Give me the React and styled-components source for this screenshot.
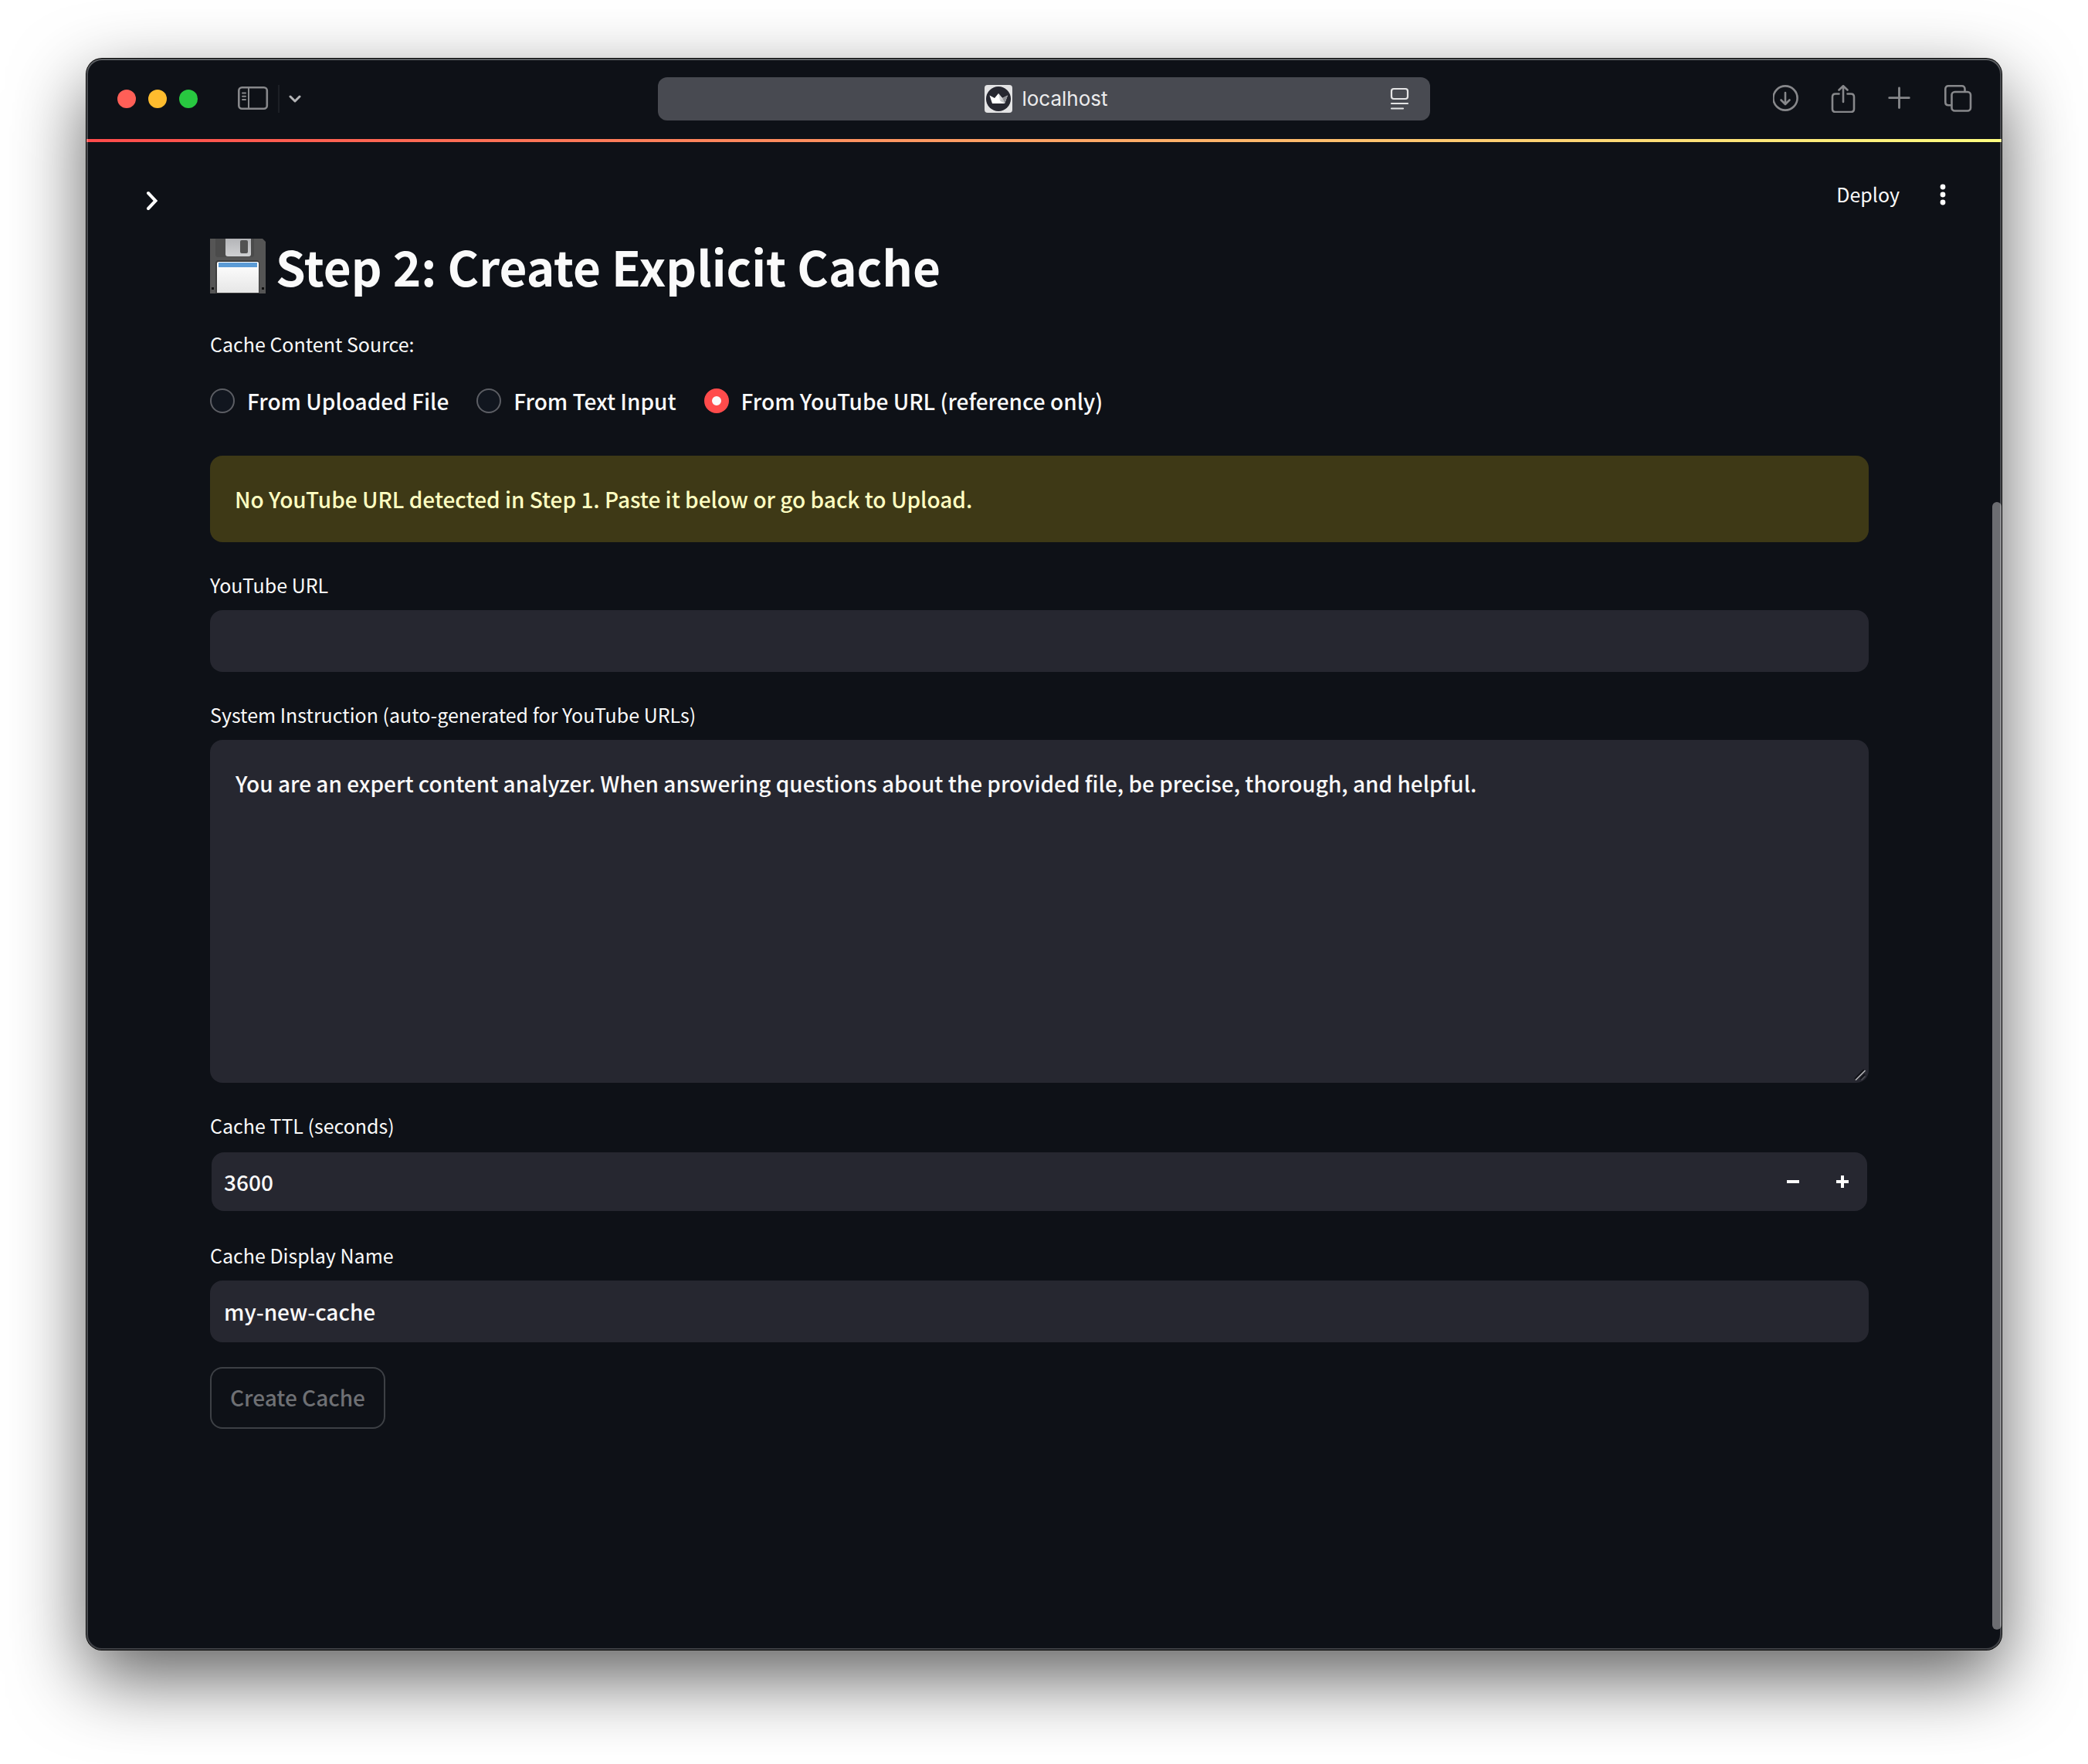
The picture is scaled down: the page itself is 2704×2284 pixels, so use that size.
import React, { useState } from "react";
import styled, { createGlobalStyle } from "styled-components";

const sans = `"Noto Sans CJK SC", "Noto Sans", sans-serif`;
const color = {
  bg: "#0e1117",
  field: "#262730",
  text: "#fafafa",
  accent: "#ff4b4b",
  chrome: "#87888b",
  address: "#484a51",
};

const GlobalStyle = createGlobalStyle`
  *, *::before, *::after { box-sizing: border-box; }
  body { margin: 0; background: #fff; }
  button, input, textarea { font: inherit; color: inherit; margin: 0; }
  button { background: none; border: 0; padding: 0; }
  svg { display: block; }
`;

const Desktop = styled.div`
  min-height: 100vh;
  padding: 76px 112px 148px;
  display: flex;
  overflow: hidden;
  font-family: ${sans};
  font-weight: 500;
  color: ${color.text};
`;

const BrowserWindow = styled.div`
  position: relative;
  flex: 1;
  min-width: 0;
  display: flex;
  flex-direction: column;
  background: ${color.bg};
  border-radius: 20px;
  box-shadow: 0 0 0 1px #000, 0 36px 96px rgba(0, 0, 0, 0.63);

  &::after {
    content: "";
    position: absolute;
    inset: 0;
    border-radius: inherit;
    pointer-events: none;
    box-shadow: inset 0 0 0 2px rgba(255, 255, 255, 0.2), inset 0 1px 0 1px rgba(255, 255, 255, 0.16);
  }
`;

const Toolbar = styled.header`
  height: 104px;
  display: grid;
  grid-template-columns: 37fr 50fr 37fr;
  align-items: center;
`;

const ToolbarStart = styled.div`
  display: flex;
  align-items: center;
  padding-left: 40px;
`;

const Lights = styled.div`
  display: flex;
  gap: 16px;
  margin-right: 52px;
`;

const Light = styled.button`
  width: 24px;
  height: 24px;
  border-radius: 50%;
  background: ${(p) => p.$fill};
`;

const Divider = styled.span`
  width: 2px;
  height: 36px;
  margin: 0 12px;
  background: #1d2026;
`;

const AddressBar = styled.div`
  height: 56px;
  display: grid;
  grid-template-columns: 1fr auto 1fr;
  align-items: center;
  padding: 0 24px;
  border-radius: 12px;
  background: ${color.address};
`;

const Address = styled.div`
  grid-column: 2;
  display: flex;
  align-items: center;
  gap: 12px;
  padding-left: 6px;
  font: 26px/32px Inter, "Liberation Sans", sans-serif;
  color: #ececed;
`;

const ReaderButton = styled.button`
  justify-self: end;
`;

const ToolbarEnd = styled.div`
  display: flex;
  justify-content: flex-end;
  gap: 38px;
  padding-right: 38px;
`;

const ProgressLine = styled.div`
  height: 4px;
  background: linear-gradient(90deg, ${color.accent}, #fffd80);
`;

const Viewport = styled.div`
  position: relative;
  flex: 1;
  padding-right: 12px;
`;

const ScrollTrack = styled.div`
  position: absolute;
  inset: 0 0 0 auto;
  width: 12px;
  display: flex;
  flex-direction: column;
  justify-content: flex-end;
  padding-bottom: 26px;
`;

const ScrollThumb = styled.div`
  height: 75.8%;
  border-radius: 6px;
  background: #6c6d71;
`;

const AppHeader = styled.div`
  height: 114px;
  display: flex;
  justify-content: space-between;
  align-items: flex-start;
  padding: 48px 48px 0 64px;
`;

const ExpandButton = styled.button`
  width: 40px;
  height: 56px;
  display: grid;
  place-items: center;
`;

const HeaderActions = styled.div`
  display: flex;
  align-items: flex-start;
  gap: 40px;
`;

const DeployButton = styled.button`
  font-size: 25px;
  font-weight: 400;
  line-height: 38px;
`;

const MenuButton = styled.button`
  width: 32px;
  height: 40px;
  display: grid;
  place-items: center;
`;

const Form = styled.form`
  display: flex;
  flex-direction: column;
  gap: 32px;
  padding: 0 160px 80px;
`;

const Title = styled.h1`
  margin: 0;
  display: flex;
  align-items: center;
  gap: 13px;
  font-size: 62px;
  line-height: 92px;
  font-weight: 700;
`;

const Field = styled.div`
  display: flex;
  flex-direction: column;
  gap: 10px;
`;

const FieldSet = styled.fieldset`
  margin: 0;
  padding: 0;
  border: 0;
  min-width: 0;
`;

const labelText = `
  padding: 0;
  font-size: 25px;
  font-weight: 400;
  line-height: 46px;
`;
const Label = styled.label`${labelText}`;
const Legend = styled.legend`${labelText}`;

const RadioRow = styled.div`
  display: flex;
  flex-wrap: wrap;
  gap: 36px;
  padding: 18px 0 16px;
  margin-top: 10px;
`;

const RadioLabel = styled.label`
  display: flex;
  align-items: center;
  gap: 16px;
  font-size: 28px;
  line-height: 46px;
`;

const Radio = styled.input`
  appearance: none;
  width: 32px;
  height: 32px;
  border: 2px solid #5c5e64;
  border-radius: 50%;
  background: #11161f;

  &:checked {
    border: 10px solid ${color.accent};
    background: #fafafa;
  }
`;

const Alert = styled.div`
  padding: 32px;
  border-radius: 16px;
  background: #3e3916;
  color: #ffffc2;
  font-size: 28px;
  line-height: 48px;
`;

const TextInput = styled.input`
  width: 100%;
  height: 80px;
  padding: 0 18px;
  border: 0;
  border-radius: 16px;
  outline: none;
  background: ${color.field};
  font-size: 28px;
`;

const AreaWrap = styled.div`
  position: relative;
  display: flex;
`;

const TextArea = styled.textarea`
  width: 100%;
  height: 444px;
  padding: 32px 33px;
  border: 0;
  border-radius: 16px;
  outline: none;
  resize: none;
  background: ${color.field};
  font-size: 28px;
  line-height: 48px;
`;

const ResizeGrip = styled.svg`
  position: absolute;
  right: 1px;
  bottom: 1px;
`;

const NumberBox = styled.div`
  height: 80px;
  display: flex;
  align-items: center;
  border: 2px solid transparent;
  border-radius: 18px;
  background: ${color.field};
  background-clip: padding-box;
`;

const NumberInput = styled.input`
  flex: 1;
  min-width: 0;
  height: 76px;
  padding: 0 16px;
  border: 0;
  outline: none;
  background: transparent;
  font-size: 28px;
`;

const StepButton = styled.button`
  width: 64px;
  height: 76px;
  display: grid;
  place-items: center;
`;

const SubmitButton = styled.button`
  align-self: flex-start;
  height: 80px;
  padding: 0 24px 2px;
  border: 2px solid #3d4045;
  border-radius: 16px;
  font-size: 28px;
  color: #6e7074;
`;

const ChromeIcon = ({ children, width = 36, height = 36, stroke = color.chrome }) => (
  <svg width={width} height={height} viewBox={`0 0 ${width} ${height}`} fill="none" stroke={stroke}
    strokeWidth="2.6" strokeLinecap="round" strokeLinejoin="round" aria-hidden="true">
    {children}
  </svg>
);

const Favicon = () => (
  <svg width="36" height="36" viewBox="0 0 36 36" aria-hidden="true">
    <rect width="36" height="36" rx="4" fill="#e3e3e4" />
    <circle cx="18" cy="18" r="16" fill="#262730" />
    <path d="M6.500 13.500l6.500 3.500L18 11l5 6 7-3.500L26 24H10z" fill="#fff" />
    <path d="M18 11l5 6-3 3.500z" fill="#d5d6d8" />
    <path d="M23 17l7-3.500L26 24z" fill="#8f9095" />
    <path d="M23 17l3 7-6-3.500z" fill="#c4c5c8" />
  </svg>
);

const Floppy = () => (
  <svg width="72" height="72" viewBox="0 0 72 72" aria-hidden="true">
    <defs>
      <linearGradient id="shutter" x1="0" y1="0" x2="0" y2="1">
        <stop offset="0" stopColor="#b4b5b8" />
        <stop offset="1" stopColor="#cfd0d2" />
      </linearGradient>
      <linearGradient id="paper" x1="0" y1="0" x2="0" y2="1">
        <stop offset="0" stopColor="#fff" />
        <stop offset="1" stopColor="#e6e6e6" />
      </linearGradient>
    </defs>
    <path d="M0 1h68l4 4v67H0z" fill="#555" />
    <path d="M7 1h50v21q0 3-3 3H10q-3 0-3-3z" fill="#4b4b4b" />
    <path d="M20 1h33v20q0 3-3 3H23q-3 0-3-3z" fill="url(#shutter)" />
    <rect x="39" y="3" width="10" height="17" rx="2" fill="#525252" />
    <path d="M7 72V33q0-4 4-4h49q4 0 4 4v39z" fill="#3e3e3e" />
    <path d="M9 71V33q0-2 2-2h50q2 0 2 2v38z" fill="url(#paper)" />
    <rect x="11" y="32" width="50" height="6" fill="#5b9bd5" />
    <rect x="2" y="64" width="3" height="3" fill="#101010" />
    <rect x="67" y="64" width="3" height="3" fill="#101010" />
  </svg>
);

const sources = ["From Uploaded File", "From Text Input", "From YouTube URL (reference only)"];

export default function App() {
  const [source, setSource] = useState(sources[2]);
  const [url, setUrl] = useState("");
  const [ttl, setTtl] = useState(3600);
  const [name, setName] = useState("my-new-cache");
  const [instruction, setInstruction] = useState(
    "You are an expert content analyzer. When answering questions about the provided file, be precise, thorough, and helpful."
  );

  return (
    <>
      <GlobalStyle />
      <Desktop>
        <BrowserWindow>
          <Toolbar>
            <ToolbarStart>
              <Lights>
                <Light $fill="#ff5f57" aria-label="Close" />
                <Light $fill="#febc2e" aria-label="Minimize" />
                <Light $fill="#28c840" aria-label="Zoom" />
              </Lights>
              <button aria-label="Sidebar">
                <ChromeIcon width={40} height={32}>
                  <rect x="1.300" y="1.300" width="36.500" height="27.500" rx="4" />
                  <path d="M14 1.500v27M6 8.500h4M6 12.800h4M6 17h4" strokeWidth="2" />
                </ChromeIcon>
              </button>
              <Divider />
              <button aria-label="Tab groups">
                <ChromeIcon width={16} height={14} stroke="#b4b5b7">
                  <path d="M2 4l6 6 6-6" strokeWidth="3" />
                </ChromeIcon>
              </button>
            </ToolbarStart>
            <AddressBar>
              <Address>
                <Favicon />
                <span>localhost</span>
              </Address>
              <ReaderButton aria-label="Reader">
                <ChromeIcon width={28} height={30} stroke="#e4e4e5">
                  <rect x="2" y="2" width="21" height="13" rx="3" strokeWidth="2.200" />
                  <path d="M2 21h21M2 27.500h15" strokeWidth="2.200" />
                </ChromeIcon>
              </ReaderButton>
            </AddressBar>
            <ToolbarEnd>
              <button aria-label="Downloads">
                <ChromeIcon>
                  <circle cx="16" cy="17" r="15.600" />
                  <path d="M16 10v14.500M10.500 19.500l5.500 5.500 5.500-5.500" />
                </ChromeIcon>
              </button>
              <button aria-label="Share">
                <ChromeIcon>
                  <path d="M11.500 11.500H7q-4 0-4 4v15.500q0 4 4 4h20q4 0 4-4V15.500q0-4-4-4h-4.500" />
                  <path d="M17 22V1.300M11.500 6.500L17 1.300 22.500 6.500" />
                </ChromeIcon>
              </button>
              <button aria-label="New tab">
                <ChromeIcon>
                  <path d="M15.500 4v25.500M2.700 16.700h25.600" strokeWidth="2.800" />
                </ChromeIcon>
              </button>
              <button aria-label="Tab overview">
                <ChromeIcon>
                  <path d="M26.500 8V5.300q0-4-4-4H5.300q-4 0-4 4v17q0 4 4 4H8" />
                  <rect x="9.500" y="9" width="24.500" height="24.500" rx="4" />
                </ChromeIcon>
              </button>
            </ToolbarEnd>
          </Toolbar>
          <ProgressLine />
          <Viewport>
            <AppHeader>
              <ExpandButton aria-label="Open sidebar">
                <svg width="16" height="26" viewBox="0 0 16 26" fill="none" stroke="#fff" strokeWidth="4" aria-hidden="true">
                  <path d="M4 3l9.500 10L4 23" strokeLinecap="round" />
                </svg>
              </ExpandButton>
              <HeaderActions>
                <DeployButton>Deploy</DeployButton>
                <MenuButton aria-label="Menu">
                  <svg width="8" height="28" viewBox="0 0 8 28" fill="#fff" aria-hidden="true">
                    <circle cx="4" cy="4" r="3.400" />
                    <circle cx="4" cy="14" r="3.400" />
                    <circle cx="4" cy="24" r="3.400" />
                  </svg>
                </MenuButton>
              </HeaderActions>
            </AppHeader>
            <Form onSubmit={(e) => e.preventDefault()}>
              <Title>
                <Floppy />
                Step 2: Create Explicit Cache
              </Title>
              <FieldSet>
                <Legend>Cache Content Source:</Legend>
                <RadioRow>
                  {sources.map((s) => (
                    <RadioLabel key={s}>
                      <Radio type="radio" name="source" checked={source === s} onChange={() => setSource(s)} />
                      {s}
                    </RadioLabel>
                  ))}
                </RadioRow>
              </FieldSet>
              <Alert role="alert">No YouTube URL detected in Step 1. Paste it below or go back to Upload.</Alert>
              <Field>
                <Label htmlFor="url">YouTube URL</Label>
                <TextInput id="url" type="text" value={url} onChange={(e) => setUrl(e.target.value)} />
              </Field>
              <Field>
                <Label htmlFor="instruction">System Instruction (auto-generated for YouTube URLs)</Label>
                <AreaWrap>
                  <TextArea id="instruction" spellCheck={false} value={instruction}
                    onChange={(e) => setInstruction(e.target.value)} />
                  <ResizeGrip width="18" height="18" viewBox="0 0 18 18" fill="none" aria-hidden="true">
                    <path d="M1 14L13 2M8 14l6-6" stroke="#101116" strokeWidth="2" />
                    <path d="M2 15.500L14.500 3" stroke="#b5b5b8" strokeWidth="1.600" />
                    <path d="M9.500 15.500l5-5" stroke="#4c4d54" strokeWidth="1.600" />
                  </ResizeGrip>
                </AreaWrap>
              </Field>
              <Field>
                <Label htmlFor="ttl">Cache TTL (seconds)</Label>
                <NumberBox>
                  <NumberInput id="ttl" type="text" inputMode="numeric" value={ttl}
                    onChange={(e) => setTtl(Number(e.target.value) || 0)} />
                  <StepButton type="button" aria-label="Decrease" onClick={() => setTtl(ttl - 1)}>
                    <svg width="16" height="16" fill="#fff" aria-hidden="true"><path d="M0 6h16v4H0z" /></svg>
                  </StepButton>
                  <StepButton type="button" aria-label="Increase" onClick={() => setTtl(ttl + 1)}>
                    <svg width="16" height="16" fill="#fff" aria-hidden="true"><path d="M0 6h6V0h4v6h6v4h-6v6H6v-6H0z" /></svg>
                  </StepButton>
                </NumberBox>
              </Field>
              <Field>
                <Label htmlFor="name">Cache Display Name</Label>
                <TextInput id="name" type="text" value={name} onChange={(e) => setName(e.target.value)} />
              </Field>
              <SubmitButton type="submit" disabled>Create Cache</SubmitButton>
            </Form>
            <ScrollTrack>
              <ScrollThumb />
            </ScrollTrack>
          </Viewport>
        </BrowserWindow>
      </Desktop>
    </>
  );
}
